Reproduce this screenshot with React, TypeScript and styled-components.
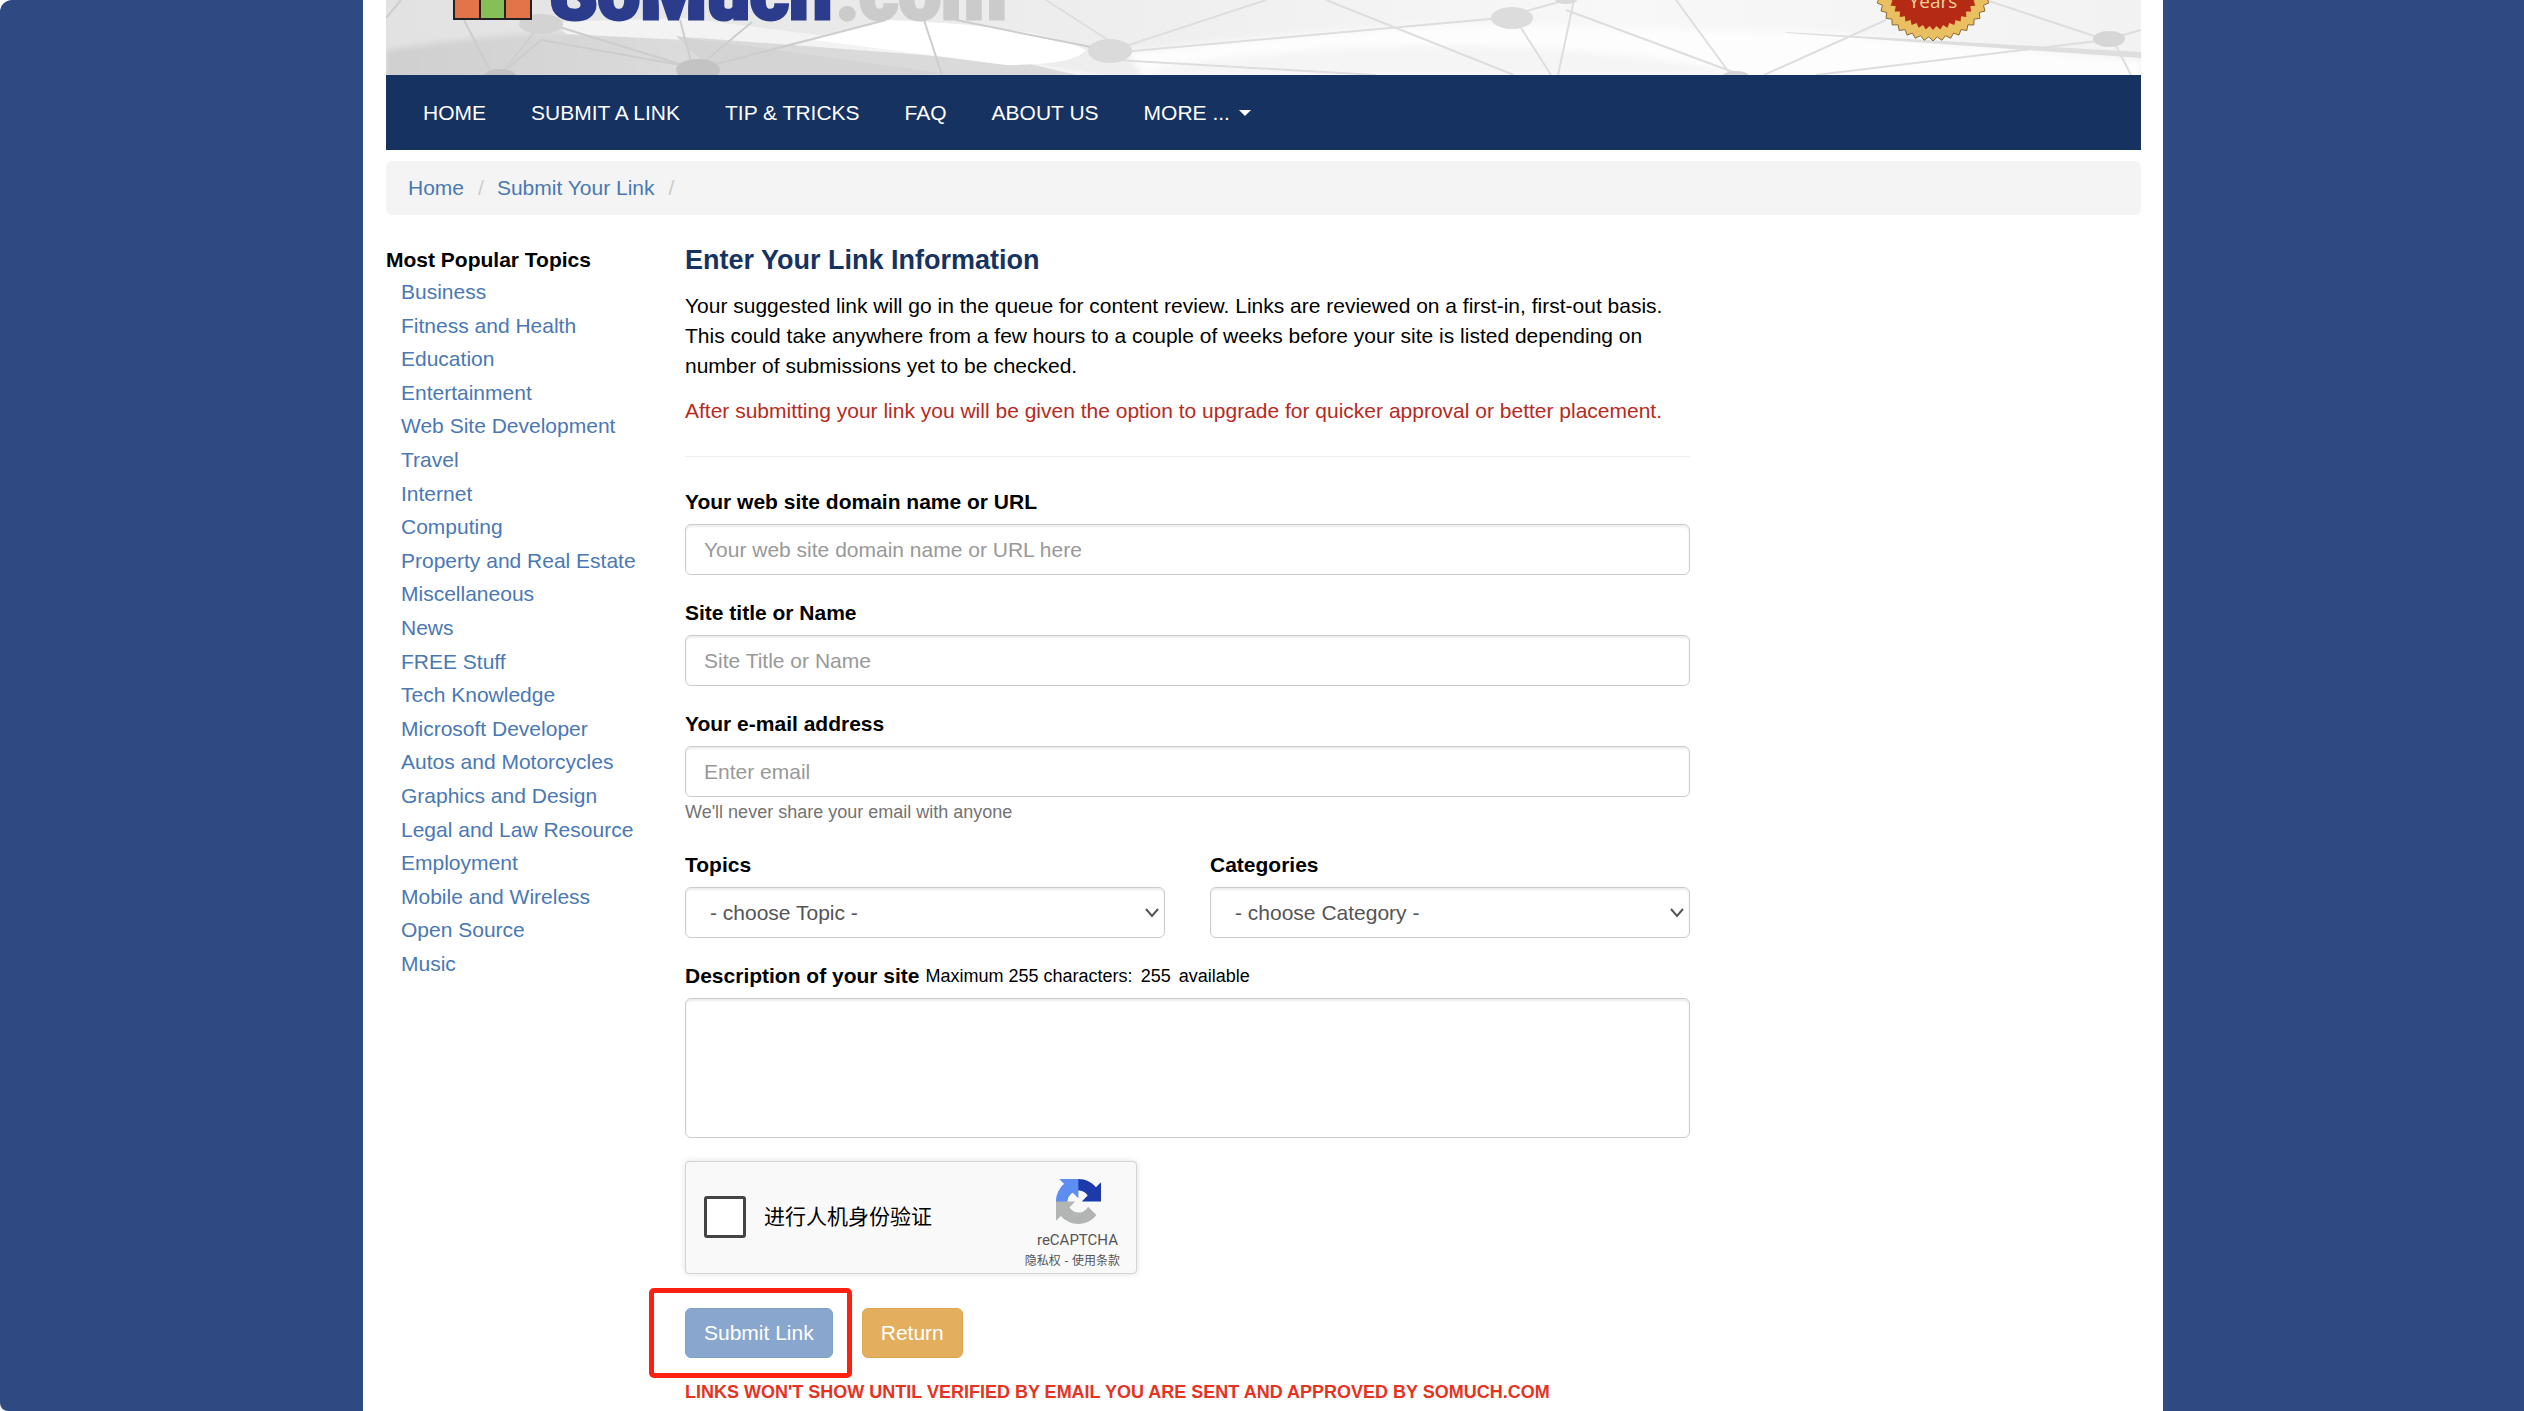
import React, { useState } from "react";
import styled, { createGlobalStyle } from "styled-components";

const GlobalStyle = createGlobalStyle`
  *, *::before, *::after { box-sizing: border-box; }
  html { background: #fff; }
  body {
    margin: 0;
    font-family: "Liberation Sans", Arial, "Noto Sans CJK SC", sans-serif;
    font-size: 21px;
    line-height: 30px;
    color: #000;
  }
  #root { display: flex; flex-direction: column; min-height: 100vh; }
`;

const Backdrop = styled.div`
  flex: 1;
  padding-left: 2px;
  background: #2f4a82;
  border-radius: 12px 0 0 8px;
  display: flex;
  justify-content: center;
  height: 100vh;
  overflow: hidden;
`;

const Sheet = styled.div`
  width: 100%;
  max-width: 1800px;
  background: #fff;
  padding: 0 22px 0 23px;
`;

const Banner = styled.header`
  position: relative;
  height: 75px;
  overflow: hidden;
  background: #eee;
`;

const BannerArt = styled.svg`
  display: block;
  width: 100%;
  height: 75px;
`;

const Nav = styled.nav`
  display: flex;
  gap: 45px;
  padding: 23px 37px 22px;
  background: #163260;
`;

const NavLink = styled.a`
  color: #fff;
  text-decoration: none;
`;

const MoreButton = styled.button`
  display: flex;
  align-items: center;
  gap: 9px;
  padding: 0;
  border: 0;
  background: none;
  color: #fff;
  font: inherit;
`;

const Caret = styled.span`
  border: 6px solid transparent;
  border-top-color: #fff;
  border-bottom: 0;
`;

const Breadcrumb = styled.ol`
  display: flex;
  list-style: none;
  margin: 11px 0 30px;
  padding: 12px 22px;
  background: #f4f4f4;
  border-radius: 6px;
`;

const Crumb = styled.li`
  &::after {
    content: "/";
    margin: 0 13px 0 14px;
    color: #ccc;
  }
`;

const TextLink = styled.a`
  color: #4a78b4;
  text-decoration: none;
`;

const Columns = styled.div`
  display: grid;
  grid-template-columns: 299px minmax(0, 1005px);
`;

const SideTitle = styled.h2`
  margin: 0 0 2px;
  font-size: 21px;
  line-height: 30px;
`;

const TopicList = styled.ul`
  display: flex;
  flex-direction: column;
  justify-content: space-between;
  min-height: 702px;
  list-style: none;
  margin: 0;
  padding: 0 0 0 15px;
`;

const Title = styled.h1`
  margin: 0 0 16px;
  font-size: 27px;
  line-height: 30px;
  color: #163260;
`;

const Paragraph = styled.p<{ $alert?: boolean }>`
  margin: 0 0 15px;
  color: ${(p) => (p.$alert ? "#b82a1c" : "#000")};
`;

const Divider = styled.hr`
  margin: 30px 0;
  border: 0;
  border-top: 1px solid #eee;
`;

const Form = styled.form`
  display: flex;
  flex-direction: column;
  gap: 23px;
`;

const Field = styled.div`
  display: flex;
  flex-direction: column;
`;

const FieldRow = styled.div`
  display: grid;
  grid-template-columns: 1fr 1fr;
  gap: 45px;
`;

const LabelRow = styled.div`
  display: flex;
  gap: 6px;
  margin-bottom: 7px;
`;

const Label = styled.label`
  font-weight: 700;
`;

const Counter = styled.span`
  display: flex;
  gap: 8px;
  font-size: 18px;
`;

const controlStyle = `
  width: 100%;
  border: 1px solid #ccc;
  border-radius: 6px;
  background: #fff;
  box-shadow: inset 0 2px 2px rgba(0, 0, 0, 0.075);
  color: #555;
  font: inherit;
`;

const Input = styled.input`
  ${controlStyle}
  height: 51px;
  padding: 9px 18px;
  &::placeholder { color: #999; opacity: 1; }
`;

const SelectWrap = styled.div`
  position: relative;
`;

const Select = styled.select`
  ${controlStyle}
  appearance: none;
  display: block;
  height: 51px;
  padding: 9px 24px;
`;

const Chevron = styled.svg`
  position: absolute;
  right: 6px;
  top: 20px;
  width: 14px;
  height: 11px;
  pointer-events: none;
`;

const TextArea = styled.textarea`
  ${controlStyle}
  display: block;
  height: 140px;
  padding: 9px 18px;
  resize: none;
`;

const Help = styled.span`
  font-size: 18px;
  color: #737373;
`;

const Captcha = styled.div`
  display: flex;
  align-items: center;
  justify-content: space-between;
  width: 452px;
  height: 113px;
  padding: 0 16px 0 18px;
  border: 1px solid #d3d3d3;
  border-radius: 4px;
  background: #f9f9f9;
  box-shadow: 0 0 6px rgba(0, 0, 0, 0.12);
`;

const CaptchaCheck = styled.label`
  display: flex;
  align-items: center;
  gap: 18px;
  padding-bottom: 2px;
`;

const CheckBox = styled.input`
  appearance: none;
  width: 42px;
  height: 42px;
  margin: 0;
  border: 3px solid #444;
  border-radius: 3px;
  background: #fff;
`;

const CaptchaBrand = styled.div`
  display: flex;
  flex-direction: column;
  align-items: flex-end;
  padding-top: 14px;
  color: #555;
  font-family: Roboto, "Noto Sans CJK SC", sans-serif;
`;

const CaptchaMark = styled.svg`
  width: 45px;
  height: 45px;
  margin: 0 19px 5px 0;
`;

const CaptchaName = styled.span`
  font-size: 15px;
  line-height: 22px;
  margin-right: 2px;
`;

const CaptchaTerms = styled.span`
  display: flex;
  gap: 4px;
  font-size: 12px;
  line-height: 20px;
`;

const TermsLink = styled.a`
  color: #555;
  text-decoration: none;
`;

const Actions = styled.div`
  display: flex;
  gap: 29px;
  margin-top: 11px;
`;

const Highlight = styled.div`
  position: relative;
  &::after {
    content: "";
    position: absolute;
    inset: -20px -19px -20px -36px;
    border: 5px solid #ff2012;
    border-radius: 5px;
    pointer-events: none;
  }
`;

const Button = styled.button<{ $tone: "blue" | "amber" }>`
  height: 50px;
  padding: 0 18px;
  border: 1px solid ${(p) => (p.$tone === "blue" ? "#7f9fc8" : "#e0a54c")};
  border-radius: 6px;
  background: ${(p) => (p.$tone === "blue" ? "#89a7ce" : "#e3ae5e")};
  color: #fff;
  font: inherit;
`;

const Notice = styled.p`
  margin: 19px 0 0;
  font-size: 18px;
  font-weight: 700;
  color: #e6331f;
`;

const topics = [
  "Business", "Fitness and Health", "Education", "Entertainment",
  "Web Site Development", "Travel", "Internet", "Computing",
  "Property and Real Estate", "Miscellaneous", "News", "FREE Stuff",
  "Tech Knowledge", "Microsoft Developer", "Autos and Motorcycles",
  "Graphics and Design", "Legal and Law Resource", "Employment",
  "Mobile and Wireless", "Open Source", "Music",
];

const navItems = ["HOME", "SUBMIT A LINK", "TIP & TRICKS", "FAQ", "ABOUT US"];

/* Serrated outline of the award seal */
const seal = (cx: number, cy: number, outer: number, inner: number, teeth: number) =>
  Array.from({ length: teeth * 2 }, (_, i) => {
    const r = i % 2 ? inner : outer;
    const a = (Math.PI * i) / teeth + Math.PI / 2;
    return `${(cx + r * Math.cos(a)).toFixed(1)},${(cy + r * Math.sin(a)).toFixed(1)}`;
  }).join(" ");

function BannerPicture() {
  return (
    <BannerArt viewBox="0 0 1755 75" preserveAspectRatio="xMinYMin slice" aria-hidden="true">
      <defs>
        <linearGradient id="sky" x1="0" x2="1">
          <stop offset="0" stopColor="#e2e2e2" />
          <stop offset="0.45" stopColor="#efefef" />
          <stop offset="0.7" stopColor="#f8f8f8" />
          <stop offset="1" stopColor="#f2f2f2" />
        </linearGradient>
        <linearGradient id="ground" x1="0" x2="1">
          <stop offset="0" stopColor="#cfcfcf" />
          <stop offset="1" stopColor="#e6e6e6" />
        </linearGradient>
        <filter id="soft"><feGaussianBlur stdDeviation="3" /></filter>
        <filter id="edge"><feGaussianBlur stdDeviation="0.7" /></filter>
      </defs>
      <rect width="1755" height="75" fill="url(#sky)" />
      <path d="M0 80V50C80 38 150 30 240 32L390 45L560 80Z" fill="url(#ground)" filter="url(#soft)" />
      <path d="M170 22L300 18L640 62L720 75H560L340 42L180 34Z" fill="#f3f3f3" filter="url(#edge)" />
      <path d="M300 37L640 63L690 75H530Z" fill="#dadada" filter="url(#edge)" />
      <path d="M290 36L555 73L530 75H330Z" fill="#d4d4d4" filter="url(#edge)" />
      <path d="M420 39L500 20Q650 25 700 50Q690 65 620 65Z" fill="#fff" filter="url(#edge)" />
      <path d="M740 52C860 40 1000 22 1130 25Q1300 30 1400 30L1755 60V80H760Z" fill="#fdfdfd" filter="url(#soft)" />
      <path d="M780 65Q1000 38 1150 48T1350 75H760Z" fill="#f5f5f5" filter="url(#soft)" />
      <path d="M1400 32L1755 52V58L1400 33Z" fill="#dedede" filter="url(#edge)" />
      <g stroke="#cdcdcd" strokeWidth="2" fill="none" filter="url(#edge)">
        <path d="M15 0L0 18M78 20L104 70M150 30L118 70M155 40L122 68M170 26L300 66M155 40L300 66M294 20L306 65M318 62L366 22M330 64L500 20M538 20L556 75M570 20L720 50" />
      </g>
      <g stroke="#dedede" strokeWidth="2" fill="none" filter="url(#edge)">
        <path d="M660 0L730 45M740 46L880 0M735 52L1115 18L1180 0M730 60L990 75M940 0L1128 75M1130 20L1165 75M1188 0L1172 75M1180 10L1355 75M1290 0L1345 75M1378 75L1500 20M1600 0L1720 40L1755 30M1720 40L1430 75M1728 42L1745 75" />
      </g>
      <g fill="#c3c3c3" filter="url(#edge)">
        <ellipse cx="155" cy="24" rx="22" ry="10" fill="#d3d3d3" />
        <ellipse cx="114" cy="76" rx="16" ry="7" />
        <ellipse cx="312" cy="70" rx="22" ry="11" />
        <ellipse cx="724" cy="51" rx="22" ry="12" fill="#dadada" />
        <ellipse cx="1126" cy="18" rx="21" ry="11" fill="#dcdcdc" />
        <ellipse cx="1180" cy="0" rx="11" ry="4" fill="#dadada" />
        <ellipse cx="1350" cy="76" rx="13" ry="5" fill="#d6d6d6" />
        <ellipse cx="1723" cy="39" rx="16" ry="8" fill="#d6d6d6" />
      </g>
      <g stroke="#222" strokeWidth="2">
        <rect x="68" y="-10" width="26" height="29" fill="#e2744a" />
        <rect x="94" y="-10" width="25" height="29" fill="#86bf56" />
        <rect x="119" y="-10" width="26" height="29" fill="#e2744a" />
      </g>
      <g fontFamily="Roboto, Liberation Sans, sans-serif" fontWeight="900" fontSize="76" strokeWidth="3">
        <text x="164" y="19" fill="#2c3c8c" stroke="#2c3c8c">SoMuch</text>
        <text x="450" y="19" fill="#cbcbcb" stroke="#cbcbcb">.com</text>
      </g>
      <polygon points={seal(1547, -19, 60, 56, 42)} fill="#e9bf62" stroke="#8a6a35" strokeWidth="1" />
      <polygon points={seal(1547, -19, 49, 45, 42)} fill="#b42a14" />
      <text x="1547" y="8" textAnchor="middle" fill="#f3cf9a" fontFamily="Open Sans, sans-serif" fontSize="19">Years</text>
    </BannerArt>
  );
}

function RecaptchaLogo() {
  return (
    <CaptchaMark viewBox="0 0 64 64" aria-hidden="true">
      <path fill="#1c3aa9" d="M64 31.955l-.033-1.37V4.687l-7.16 7.16C50.948 4.674 42.033.093 32.05.093c-10.4 0-19.622 4.96-25.458 12.64l11.736 11.86a15.55 15.55 0 0 1 4.754-5.334c2.05-1.6 4.952-2.906 8.968-2.906.485 0 .86.057 1.135.163 4.976.393 9.288 3.14 11.828 7.124l-8.307 8.307L64 31.955" />
      <path fill="#5c8df0" d="M31.862.094l-1.37.033H4.594l7.16 7.16C4.58 13.147 0 22.06 0 32.046c0 10.4 4.96 19.622 12.64 25.458L24.5 45.768a15.55 15.55 0 0 1-5.334-4.754c-1.6-2.05-2.906-4.952-2.906-8.968 0-.485.057-.86.163-1.135.393-4.976 3.14-9.288 7.124-11.828l8.307 8.307L31.862.094" />
      <path fill="#b3b5b4" d="M.001 32.045l.033 1.37v25.898l7.16-7.16c5.86 7.173 14.774 11.754 24.76 11.754 10.4 0 19.622-4.96 25.458-12.64l-11.736-11.86a15.55 15.55 0 0 1-4.754 5.334c-2.05 1.6-4.952 2.906-8.968 2.906-.485 0-.86-.057-1.135-.163-4.976-.393-9.288-3.14-11.828-7.124l8.307-8.307-27.297-.008" />
    </CaptchaMark>
  );
}

function Picker({ id, label, option }: { id: string; label: string; option: string }) {
  return (
    <Field>
      <LabelRow><Label htmlFor={id}>{label}</Label></LabelRow>
      <SelectWrap>
        <Select id={id}><option>{option}</option></Select>
        <Chevron viewBox="0 0 14 11" aria-hidden="true">
          <path d="M1 2L7 9L13 2" fill="none" stroke="#555" strokeWidth="2" />
        </Chevron>
      </SelectWrap>
    </Field>
  );
}

export default function App() {
  const [description, setDescription] = useState("");
  return (
    <>
      <GlobalStyle />
      <Backdrop>
        <Sheet>
          <Banner><BannerPicture /></Banner>
          <Nav>
            {navItems.map((n) => <NavLink href="#" key={n}>{n}</NavLink>)}
            <MoreButton type="button">MORE ... <Caret /></MoreButton>
          </Nav>
          <Breadcrumb>
            <Crumb><TextLink href="#">Home</TextLink></Crumb>
            <Crumb><TextLink href="#">Submit Your Link</TextLink></Crumb>
          </Breadcrumb>
          <Columns>
            <aside>
              <SideTitle>Most Popular Topics</SideTitle>
              <TopicList>
                {topics.map((t) => <li key={t}><TextLink href="#">{t}</TextLink></li>)}
              </TopicList>
            </aside>
            <main>
              <Title>Enter Your Link Information</Title>
              <Paragraph>
                Your suggested link will go in the queue for content review. Links are reviewed on a first-in, first-out basis. This could take anywhere from a few hours to a couple of weeks before your site is listed depending on number of submissions yet to be checked.
              </Paragraph>
              <Paragraph $alert>
                After submitting your link you will be given the option to upgrade for quicker approval or better placement.
              </Paragraph>
              <Divider />
              <Form onSubmit={(e) => e.preventDefault()}>
                <Field>
                  <LabelRow><Label htmlFor="url">Your web site domain name or URL</Label></LabelRow>
                  <Input id="url" placeholder="Your web site domain name or URL here" />
                </Field>
                <Field>
                  <LabelRow><Label htmlFor="title">Site title or Name</Label></LabelRow>
                  <Input id="title" placeholder="Site Title or Name" />
                </Field>
                <Field>
                  <LabelRow><Label htmlFor="email">Your e-mail address</Label></LabelRow>
                  <Input id="email" type="email" placeholder="Enter email" />
                  <Help>We'll never share your email with anyone</Help>
                </Field>
                <FieldRow>
                  <Picker id="topic" label="Topics" option="- choose Topic -" />
                  <Picker id="category" label="Categories" option="- choose Category -" />
                </FieldRow>
                <Field>
                  <LabelRow>
                    <Label htmlFor="description">Description of your site</Label>
                    <Counter>
                      <span>Maximum 255 characters:</span>
                      <span>{255 - description.length}</span>
                      <span>available</span>
                    </Counter>
                  </LabelRow>
                  <TextArea
                    id="description"
                    maxLength={255}
                    value={description}
                    onChange={(e) => setDescription(e.target.value)}
                  />
                </Field>
                <Captcha>
                  <CaptchaCheck>
                    <CheckBox type="checkbox" />
                    <span>进行人机身份验证</span>
                  </CaptchaCheck>
                  <CaptchaBrand>
                    <RecaptchaLogo />
                    <CaptchaName>reCAPTCHA</CaptchaName>
                    <CaptchaTerms>
                      <TermsLink href="#">隐私权</TermsLink>
                      <span>-</span>
                      <TermsLink href="#">使用条款</TermsLink>
                    </CaptchaTerms>
                  </CaptchaBrand>
                </Captcha>
                <Actions>
                  <Highlight><Button $tone="blue">Submit Link</Button></Highlight>
                  <Button $tone="amber" type="button">Return</Button>
                </Actions>
              </Form>
              <Notice>LINKS WON'T SHOW UNTIL VERIFIED BY EMAIL YOU ARE SENT AND APPROVED BY SOMUCH.COM</Notice>
            </main>
          </Columns>
        </Sheet>
      </Backdrop>
    </>
  );
}
